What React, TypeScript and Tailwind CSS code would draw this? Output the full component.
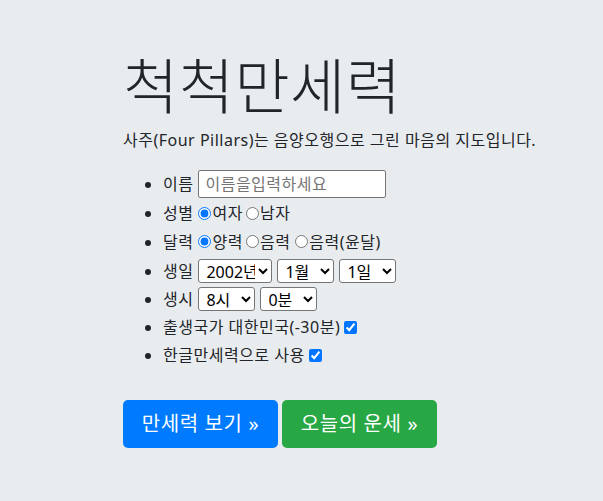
import React from 'react';

const selectCls =
	'h-6 rounded-[3px] border border-[#767676] bg-white pl-[3px] text-[16px] leading-none tracking-normal text-black';

const App = () => {
	const years = [2000, 2001, 2002, 2003];
	return (
		<div
			className="min-h-[501px] w-full bg-[#e9ecef] pl-[123px] pt-[46px] text-[16px] tracking-[0.5px] text-[#212529]"
			style={{ fontFamily: '"Noto Sans", "Noto Sans CJK KR", sans-serif' }}
		>
			<h1 className="text-[60px] font-light leading-[80px] tracking-[0.5px]">척척만세력</h1>
			<p className="mt-[2px] leading-6">
				사주(Four Pillars)는 음양오행으로 그린 마음의 지도입니다.
			</p>
			<ul className="mt-4 list-disc pl-10 leading-6">
				<li className="h-[31px]">
					<div className="flex h-[31px] items-center gap-[5px]">
						<span>이름</span>
						<input
							type="text"
							placeholder="이름을입력하세요"
							className="h-7 w-[188px] rounded-[2px] border border-[#767676] bg-white px-[6px] placeholder:text-[#757575]"
						/>
					</div>
				</li>
				<li className="h-7">
					<div className="flex h-7 items-center">
						<span>성별</span>
						<input type="radio" name="gender" defaultChecked className="ml-[5px] mr-[1px] h-[13px] w-[13px]" />
						<span>여자</span>
						<input type="radio" name="gender" className="ml-[3px] mr-[1px] h-[13px] w-[13px]" />
						<span>남자</span>
					</div>
				</li>
				<li className="h-[29px]">
					<div className="flex h-[29px] items-center">
						<span>달력</span>
						<input type="radio" name="cal" defaultChecked className="ml-[5px] mr-[1px] h-[13px] w-[13px]" />
						<span>양력</span>
						<input type="radio" name="cal" className="ml-[3px] mr-[1px] h-[13px] w-[13px]" />
						<span>음력</span>
						<input type="radio" name="cal" className="ml-[5px] mr-[1px] h-[13px] w-[13px]" />
						<span>음력(윤달)</span>
					</div>
				</li>
				<li className="h-[29px]">
					<div className="flex h-[29px] items-center gap-[5px]">
						<span>생일</span>
						<select defaultValue="2002" className={`${selectCls} w-[74px]`}>
							{years.map((y) => (
								<option key={y} value={y}>
									{y}년
								</option>
							))}
						</select>
						<select defaultValue="1" className={`${selectCls} w-[57px]`}>
							{Array.from({ length: 12 }, (_, i) => (
								<option key={i} value={i + 1}>
									{i + 1}월
								</option>
							))}
						</select>
						<select defaultValue="1" className={`${selectCls} w-[57px]`}>
							{Array.from({ length: 31 }, (_, i) => (
								<option key={i} value={i + 1}>
									{i + 1}일
								</option>
							))}
						</select>
					</div>
				</li>
				<li className="h-7">
					<div className="flex h-7 items-center gap-[5px]">
						<span>생시</span>
						<select defaultValue="8" className={`${selectCls} w-[57px]`}>
							{Array.from({ length: 24 }, (_, i) => (
								<option key={i} value={i}>
									{i}시
								</option>
							))}
						</select>
						<select defaultValue="0" className={`${selectCls} w-[57px]`}>
							{[0, 30].map((m) => (
								<option key={m} value={m}>
									{m}분
								</option>
							))}
						</select>
					</div>
				</li>
				<li className="h-7">
					<div className="flex h-7 items-center gap-[4px]">
						<span>출생국가 대한민국(-30분)</span>
						<input type="checkbox" defaultChecked className="h-[13px] w-[13px]" />
					</div>
				</li>
				<li className="h-7">
					<div className="flex h-7 items-center gap-[4px]">
						<span>한글만세력으로 사용</span>
						<input type="checkbox" defaultChecked className="h-[13px] w-[13px]" />
					</div>
				</li>
			</ul>
			<div className="mt-[31px] flex gap-1">
				<a className="flex h-[48px] w-[155px] items-center justify-center rounded-[5px] bg-[#007bff] text-[20px] tracking-[0.6px] text-white">
					만세력 보기 »
				</a>
				<a className="flex h-[48px] w-[155px] items-center justify-center rounded-[5px] bg-[#28a745] text-[20px] tracking-[0.6px] text-white">
					오늘의 운세 »
				</a>
			</div>
		</div>
	);
};

export default App;
